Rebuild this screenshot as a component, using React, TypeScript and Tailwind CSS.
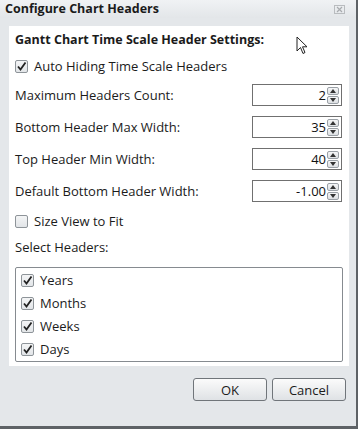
import React from "react";

const font = { fontFamily: '"Open Sans", "Noto Sans", sans-serif' };

function Check({ checked }: { checked: boolean }) {
  return (
    <span className="flex h-[13px] w-[13px] shrink-0 items-center justify-center rounded-[2px] border border-[#8e9499] bg-gradient-to-b from-[#f4f5f6] to-[#e2e5e8]">
      {checked && (
        <svg width="11" height="11" viewBox="0 0 11 11">
          <path d="M2 5.5 L4.5 8.5 L9.5 1.5" fill="none" stroke="#222" strokeWidth="1.8" />
        </svg>
      )}
    </span>
  );
}

function Spinner({ value }: { value: string }) {
  return (
    <div className="flex h-[22px] w-[90px] items-center border border-[#707070] bg-white pr-[2px]">
      <span className="flex-1 pr-[1px] text-right text-[13px] text-[#111]">{value}</span>
      <div className="flex flex-col gap-[1px]">
        <span className="flex h-[8px] w-[12px] items-center justify-center rounded-[2px] border border-[#9aa0a6] bg-gradient-to-b from-[#f5f6f7] to-[#dde0e3]">
          <svg width="6" height="4" viewBox="0 0 6 4"><path d="M0 4 L3 0 L6 4 Z" fill="#333" /></svg>
        </span>
        <span className="flex h-[8px] w-[12px] items-center justify-center rounded-[2px] border border-[#9aa0a6] bg-gradient-to-b from-[#f5f6f7] to-[#dde0e3]">
          <svg width="6" height="4" viewBox="0 0 6 4"><path d="M0 0 L6 0 L3 4 Z" fill="#333" /></svg>
        </span>
      </div>
    </div>
  );
}

function Row({ label, value }: { label: string; value: string }) {
  return (
    <div className="flex h-[22px] items-center justify-between">
      <span>{label}</span>
      <Spinner value={value} />
    </div>
  );
}

export default function App() {
  const headers = ["Years", "Months", "Weeks", "Days"];
  return (
    <div
      className="relative flex h-[429px] w-[358px] flex-col border-r-2 border-b-[3px] border-[#5e6266] bg-[#e4e7ea] text-[13px] leading-[18px] text-[#1b1b1b]"
      style={font}
    >
      <div className="flex h-[18px] items-center justify-between bg-gradient-to-b from-[#f0f2f4] to-[#e3e6e9] pl-[5px] pr-[11px]">
        <span className="text-[12.5px] font-bold leading-none">Configure Chart Headers</span>
        <svg width="11" height="9" viewBox="0 0 11 9">
          <rect x="0.5" y="0.5" width="10" height="8" fill="none" stroke="#b9bcbf" />
          <path d="M3 2 L8 7 M8 2 L3 7" stroke="#a8abae" strokeWidth="1.2" />
        </svg>
      </div>

      <div className="ml-[9px] mr-[7px] mt-[8px] flex h-[340px] flex-col bg-white px-[6px] pt-[5px]">
        <div className="text-[12.5px] font-bold leading-[18px]">Gantt Chart Time Scale Header Settings:</div>
        <div className="mt-[8px] flex h-[18px] items-center gap-[6px]">
          <Check checked />
          <span>Auto Hiding Time Scale Headers</span>
        </div>
        <div className="mt-[9px] flex flex-col gap-[10px] pr-[1px]">
          <Row label="Maximum Headers Count:" value="2" />
          <Row label="Bottom Header Max Width:" value="35" />
          <Row label="Top Header Min Width:" value="40" />
          <Row label="Default Bottom Header Width:" value="-1.00" />
        </div>
        <div className="mt-[10px] flex h-[18px] items-center gap-[6px]">
          <Check checked={false} />
          <span>Size View to Fit</span>
        </div>
        <div className="mt-[8px] h-[18px]">Select Headers:</div>
        <div className="mt-[11px] flex h-[95px] flex-col gap-[5px] rounded-[2px] border border-[#868b90] px-[5px] pt-[3px]">
          {headers.map((h) => (
            <div key={h} className="flex h-[18px] items-center gap-[6px]">
              <Check checked />
              <span>{h}</span>
            </div>
          ))}
        </div>
      </div>

      <div className="mr-[10px] mt-[12px] flex justify-end gap-[5px]">
        <button className="h-[23px] w-[74px] rounded-[3px] border border-[#70757a] bg-gradient-to-b from-[#fbfbfb] to-[#dfe2e5] text-[13px]">
          OK
        </button>
        <button className="h-[23px] w-[74px] rounded-[3px] border border-[#70757a] bg-gradient-to-b from-[#fbfbfb] to-[#dfe2e5] text-[13px]">
          Cancel
        </button>
      </div>

      <svg className="absolute left-[296px] top-[36px]" width="13" height="20" viewBox="0 0 13 20">
        <path d="M1 1 L1 15 L4.5 11.5 L7 17.5 L9 16.5 L6.5 10.8 L11 10.8 Z" fill="#fff" stroke="#222" strokeWidth="1" />
      </svg>
    </div>
  );
}
